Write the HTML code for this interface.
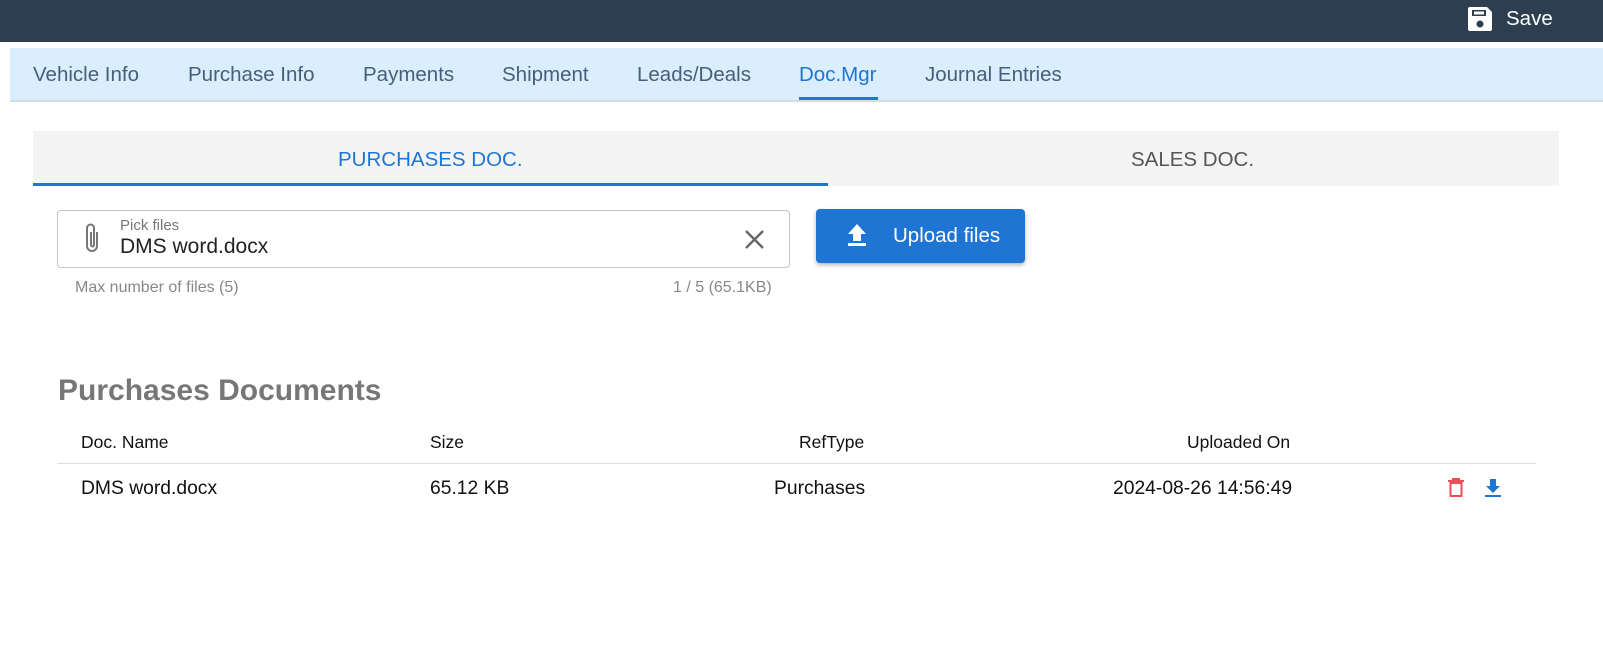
<!DOCTYPE html>
<html><head><style>
*{box-sizing:border-box;margin:0;padding:0}
body{width:1603px;height:662px;background:#fff;font-family:"Liberation Sans",sans-serif;position:relative;overflow:hidden}
.top{position:absolute;left:0;top:0;width:1603px;height:42px;background:#2c3e50}
.save{position:absolute;left:1466px;top:5px;color:#fff;font-size:20.5px;display:flex;align-items:center}
.tabs{position:absolute;left:10px;top:48px;width:1593px;height:54px;background:#daeefd;border-bottom:2px solid #cfdde8}
.tab{position:absolute;top:15px;font-size:20.5px;color:#466079}
.sub{position:absolute;left:33px;top:131px;width:1526px;height:55px;background:#f4f4f4}
.st{position:absolute;top:17px;font-size:20.5px}
.abs{position:absolute}
</style></head><body>
<div class="top"></div>
<div class="save"><svg width="28" height="28" viewBox="0 0 28 28"><path d="M2 4a2 2 0 0 1 2-2h17l5 5v17a2 2 0 0 1-2 2H4a2 2 0 0 1-2-2z" fill="#fff"/><rect x="6" y="5" width="14" height="6" fill="#2c3e50"/><rect x="8" y="6.5" width="10" height="3" fill="#fff"/><circle cx="14" cy="19" r="3.5" fill="#2c3e50"/></svg><span style="margin-left:12px">Save</span></div>
<div class="tabs">
<span class="tab" style="left:23px">Vehicle Info</span>
<span class="tab" style="left:178px">Purchase Info</span>
<span class="tab" style="left:353px">Payments</span>
<span class="tab" style="left:492px">Shipment</span>
<span class="tab" style="left:627px">Leads/Deals</span>
<span class="tab" style="left:789px;color:#1e75d4">Doc.Mgr</span>
<div class="abs" style="left:789px;top:49px;width:79px;height:3px;background:#1e75d4"></div>
<span class="tab" style="left:915px">Journal Entries</span>
</div>
<div class="sub">
<span class="st" style="left:305px;color:#1e75d4">PURCHASES DOC.</span>
<span class="st" style="left:1098px;color:#555">SALES DOC.</span>
<div class="abs" style="left:0;top:52px;width:795px;height:3px;background:#1e75d4"></div>
</div>
<div class="abs" style="left:57px;top:210px;width:733px;height:58px;border:1px solid #c4c4c4;border-radius:4px"></div>
<svg class="abs" style="left:82px;top:222px" width="20" height="34" viewBox="0 0 20 34"><path d="M15 10v14a5 5 0 0 1-10 0V6a3.5 3.5 0 0 1 7 0v17a1.5 1.5 0 0 1-3 0V10" fill="none" stroke="#777" stroke-width="2"/></svg>
<div class="abs" style="left:120px;top:217px;font-size:15px;color:#777">Pick files</div>
<div class="abs" style="left:120px;top:235px;font-size:21px;color:#222">DMS word.docx</div>
<svg class="abs" style="left:744px;top:229px" width="21" height="21" viewBox="0 0 21 21"><path d="M2 2L19 19M19 2L2 19" stroke="#666" stroke-width="2.4"/></svg>
<div class="abs" style="left:75px;top:279px;font-size:16px;color:#888">Max number of files (5)</div>
<div class="abs" style="left:673px;top:279px;font-size:16px;color:#888">1 / 5 (65.1KB)</div>
<div class="abs" style="left:816px;top:209px;width:209px;height:54px;background:#1e75d4;border-radius:4px;box-shadow:0 2px 4px rgba(0,0,0,.3)"></div>
<svg class="abs" style="left:846px;top:223px" width="22" height="24" viewBox="0 0 22 24"><path d="M11 1L2 11h5v7h8v-7h5z" fill="#fff"/><rect x="2" y="20" width="18" height="3" fill="#fff"/></svg>
<div class="abs" style="left:893px;top:224px;font-size:20.5px;color:#fff">Upload files</div>
<div class="abs" style="left:58px;top:374px;font-size:30px;font-weight:bold;color:#777">Purchases Documents</div>
<div class="abs" style="left:81px;top:432px;font-size:17.5px;color:#111">Doc. Name</div>
<div class="abs" style="left:430px;top:432px;font-size:17.5px;color:#111">Size</div>
<div class="abs" style="left:799px;top:432px;font-size:17.5px;color:#111">RefType</div>
<div class="abs" style="left:1187px;top:432px;font-size:17.5px;color:#111">Uploaded On</div>
<div class="abs" style="left:57px;top:463px;width:1479px;height:1px;background:#ddd"></div>
<div class="abs" style="left:81px;top:478px;font-size:19.3px;color:#111">DMS word.docx</div>
<div class="abs" style="left:430px;top:478px;font-size:19.3px;color:#111">65.12 KB</div>
<div class="abs" style="left:774px;top:478px;font-size:19.3px;color:#111">Purchases</div>
<div class="abs" style="left:1113px;top:478px;font-size:19.3px;color:#111">2024-08-26 14:56:49</div>
<svg class="abs" style="left:1447px;top:478px" width="18" height="20" viewBox="0 0 18 20"><path d="M1 3h16M6 3V1h6v2" stroke="#f04f5a" stroke-width="2" fill="none"/><rect x="3.5" y="5" width="11" height="13" fill="none" stroke="#f04f5a" stroke-width="2"/></svg>
<svg class="abs" style="left:1484px;top:478px" width="18" height="20" viewBox="0 0 18 20"><path d="M6 1h6v7h4l-7 7-7-7h4z" fill="#1e75d4"/><rect x="1" y="17" width="16" height="2" fill="#1e75d4"/></svg>
</body></html>
